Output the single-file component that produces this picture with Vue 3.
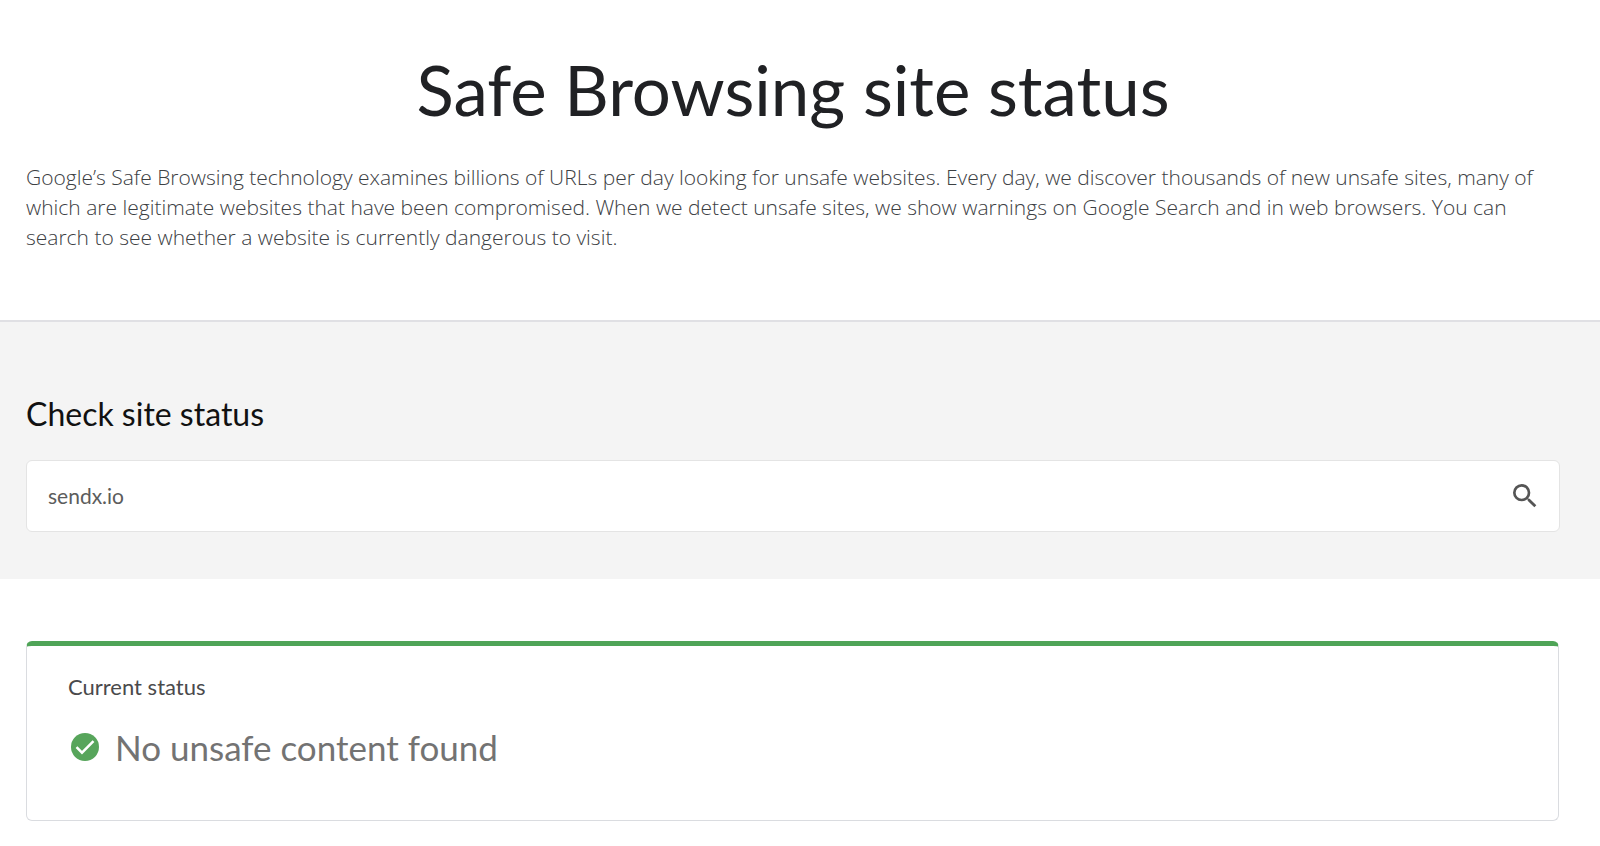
<script setup>
import { ref } from 'vue'

const site = ref('sendx.io')
</script>

<template>
  <main class="page">
    <header class="intro">
      <h1>Safe Browsing site status</h1>
      <p>
        Google’s Safe Browsing technology examines billions of URLs per day looking for unsafe
        websites. Every day, we discover thousands of new unsafe sites, many of which are
        legitimate websites that have been compromised. When we detect unsafe sites, we show
        warnings on Google Search and in web browsers. You can search to see whether a website is
        currently dangerous to visit.
      </p>
    </header>

    <section class="check">
      <h2><label for="site">Check site status</label></h2>
      <form class="search" @submit.prevent>
        <input id="site" v-model="site" type="text" autocomplete="off" spellcheck="false" />
        <button type="submit" aria-label="Search">
          <svg viewBox="0 0 24 24" aria-hidden="true">
            <path
              d="M15.5 14h-.79l-.28-.27A6.47 6.47 0 0 0 16 9.5 6.5 6.5 0 1 0 9.5 16c1.61 0 3.09-.59 4.23-1.57l.27.28v.79l5 4.99L20.49 19l-4.99-5zm-6 0a4.5 4.5 0 1 1 0-9 4.5 4.5 0 0 1 0 9z"
            />
          </svg>
        </button>
      </form>
    </section>

    <section class="result">
      <div class="card">
        <h3>Current status</h3>
        <p class="verdict">
          <svg viewBox="0 0 28 28" aria-hidden="true">
            <circle cx="14" cy="14" r="14" />
            <path d="M5.5 14.2l5.5 5.5L22.5 8.2" />
          </svg>
          <span>No unsafe content found</span>
        </p>
      </div>
    </section>
  </main>
</template>

<style>
body {
  margin: 0;
  background: #fff;
}
</style>

<style scoped>
.page {
  font-family: Lato, "Open Sans", sans-serif;
}

h1,
h2,
h3,
p {
  margin: 0;
  font-weight: 400;
}

.intro {
  padding: 46px 40px 68px 26px;
  border-bottom: 2px solid #e0e0e4;
}

h1 {
  font-size: 69px;
  line-height: 88px;
  text-align: center;
  color: #202124;
}

.intro p {
  margin-top: 28px;
  font-family: "Open Sans", sans-serif;
  font-size: 21px;
  font-weight: 300;
  line-height: 30px;
  color: #3c4043;
}

.check {
  padding: 72px 40px 47px 26px;
  background: #f4f4f4;
}

h2 {
  font-size: 32px;
  line-height: 40px;
  color: #111;
}

.search {
  display: flex;
  align-items: center;
  height: 70px;
  margin-top: 26px;
  padding: 0 18px 0 21px;
  border: 1px solid #e4e4e4;
  border-radius: 6px;
  background: #fff;
}

.search input {
  flex: 1;
  min-width: 0;
  padding: 0;
  border: 0;
  outline: 0;
  background: transparent;
  font: inherit;
  font-size: 21px;
  line-height: 30px;
  color: #5c5c5c;
}

.search button {
  display: flex;
  padding: 0;
  border: 0;
  background: transparent;
  cursor: pointer;
}

.search svg {
  width: 32px;
  height: 32px;
  fill: #555;
}

.result {
  padding: 62px 41px 24px 26px;
}

.card {
  padding: 26px 41px 52px;
  border: 1px solid #dadce0;
  border-top: 5px solid #4fa457;
  border-radius: 6px;
}

h3 {
  font-size: 22px;
  line-height: 30px;
  color: #4a4a4c;
}

.verdict {
  display: flex;
  align-items: center;
  gap: 16px;
  margin-top: 24px;
  padding-left: 3px;
  font-size: 35px;
  line-height: 42px;
  color: #737373;
}

.verdict svg {
  width: 28px;
  height: 28px;
}

.verdict circle {
  fill: #57a55b;
}

.verdict path {
  fill: none;
  stroke: #fff;
  stroke-width: 2.5;
}
</style>
